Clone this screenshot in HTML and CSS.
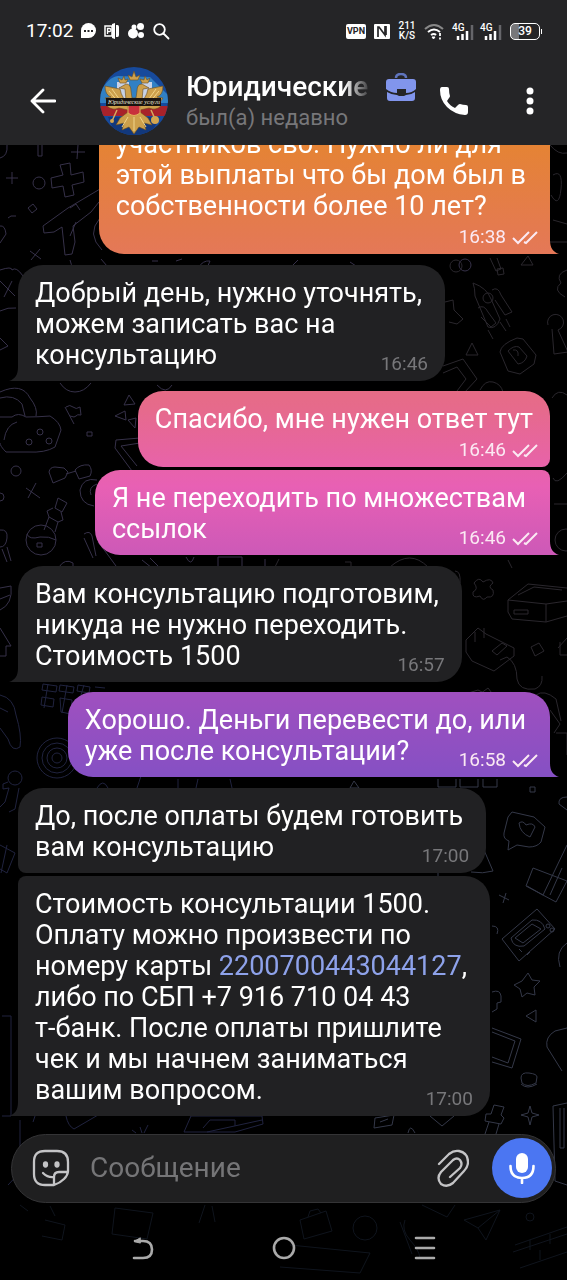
FILE: index.html
```html
<!DOCTYPE html>
<html lang="ru">
<head>
  <meta charset="UTF-8">
  <meta name="viewport" content="width=device-width, initial-scale=1.0">
  <title>Чат</title>
  <link rel="stylesheet" href="styles.css">
</head>
<body>
  <!-- обои чата -->
  <svg class="wallpaper" viewBox="0 0 567 1280" preserveAspectRatio="xMidYMid slice" aria-hidden="true">
    <g class="doodle violet">
      <path d="M38 145v11h4v-11M0 158q8-2 7-13M71 152h14M78 145l-1 14M6 178h12M12 172v12M60 165l10-2 1 12 12-3 1 10-12 3 2 10-9 2-2-11-11 2-1-10 12-3z"/>
      <circle cx="39" cy="183" r="6"/>
      <path d="M28 208l5-4 4 5-5 4zM0 226q5-1 6 8l-6 9M8 218l3-2h5M100 189L68 208l-25 18 1 7 10-1 8-5 3 28 7-1 3-12-2-16 18-14 8-10M70 208l6-4 4 6M76 222l-6 14M100 218q-14 16 2 32M30 251l11 8M40 249l-9 11M70 260q2 10 10 13M101 259l6 7M0 270q12-4 12 0 4-4 11 6M0 281l15 15M12 281l-8 16M0 311q8-4 16-3M0 338l8 8-8 4"/>
      <path d="M152 261h6M153 267h6M176 261l6-2M176 267l6 1M198 268q5-8 12-7l-3 7M290 268l8-8M350 262l9 6M465 271a6 6 0 1 1 0-12 6 6 0 0 1 0 12M60 383q6 9 15 9t16-9M157 385q9 10 15 0M0 392q22-10 30 6 8 10 6 18M0 398q14-4 22 6l3 12M0 417h12q6-5 14 0 12 0 24-1 10 6 11 14l-6 17q-10 6-27 5H6q-6-6-6-9M4 440q2-15 13-18"/>
      <circle cx="40" cy="432" r="3"/><circle cx="29" cy="442" r="3"/><circle cx="49" cy="441" r="3"/>
      <path d="M65 407l9 17M66 407q4-3 7 0t7 0l1 8q-4-1-5 1t-6 0M124 405l5-10 6 9zM115 416l10-5 1 9zM128 420l8-2-1 10zM87 432h5v4h-5zM140 438l-24 2-1 8 17 23M140 443l-19 3 16 20M49 472q1-5 6-5l9 1 4 4-3 6-12 5zM66 474l10-3M75 470q5-6 14-5 4 5 1 11l-11 3z"/>
      <circle cx="16" cy="471" r="5"/><circle cx="0" cy="497" r="4"/>
      <path d="M26 488l14 10M36 483l-8 15M97 480q-14-3-17 10 0 14 14 16M97 484q-9 3-6 11M58 498l9 5-5 9-7-4zM53 508l-6 3 2 6 9 5 5-2-2-8M49 517l-5 13M58 522l-3 10M27 534q2 6 13 3 9-1 16 3"/>
      <circle cx="41" cy="540" r="15"/><path d="M37 543h5v4h-5zM0 530q8-1 7 8t-7 9M2 549l5 13M7 547l4 14M84 534q6-4 8 2l4 20M84 538l9 20M98 542q8 10 18 24M142 560l10 8M150 558l10 10M186 557q5 10 8 0M218 567v-10h24v10M265 567v-8M59 567q6-9 14-4v4M0 588l11-2q2 18-11 24M0 599l10-4M0 628l11 18H6v10H0"/>
    </g>
    <g class="doodle blue">
      <path d="M43 684l14 2-1 6-14-2zM60 685l14 2-1 6-14-2zM78 685l12 2-1 6-12-2zM95 687l10 1M42 697l12 2-1 8-12-2zM60 698l12 2-1 14-10-2zM48 684l-4 24M67 685l-5 28M84 685l-3 10M0 695q14 3 16 20 6 20 4 32-8 6-12-8L0 728M0 708l8 4"/>
      <circle cx="57" cy="758" r="20"/><circle cx="57" cy="758" r="15"/><circle cx="57" cy="758" r="10"/><circle cx="57" cy="758" r="5"/>
      <circle cx="15" cy="778" r="7"/><path d="M8 782l-5 2v5l6-1-4 14-5 5M19 788l-4 21-6 3M97 788q6-10 11 0M137 788l4-12M178 779v9M196 788l2-9M230 779l2 9M0 845l15 8-8 20-7-4M1 873l6-28M2 1016h9v100H2M35 1116l-2 6M66 1116q2 10 8 13l24-14M140 1127l2 6M132 1130l4 3M148 1125l-4 8M184 1132l7-16h71l1 8-28 8h-51M203 1128l7-8h25v6M262 1120l-55 12M8 1185l16-17M20 1120v60"/>
    </g>
    <g class="doodle grey">
      <path d="M550 145q8 10 17 8M553 175q10-6 8 14t-10 6M553 220l14 4M550 242h17M475 296q0-8-2-13 14 5 18 16l9 20q-4 11-12 8zM492 290q6-4 9 5l11 17-7 3-10-15M478 308q6-4 10 4l8 11-5 4-10-10M500 322l6 9M506 319l4 8M488 330l5 9"/>
      <circle cx="488" cy="298" r="5"/><circle cx="456" cy="266" r="6"/>
      <path d="M490 258l6 13 5-2-4-11M497 269l6-1 1 6-6 1zM528 256l5 9h-12zM567 270q-12 4-6 13-9 7 4 14M548 325a8 8 0 1 1 10 5l10 22-14 2-2-25M472 343l6 12h-12zM500 352q1-8 17-14l6 1 13 16-2 9-14 10-12-3zM508 351q6-6 11-4l8 9q-2 7-9 8zM513 350q6-1 5 6M445 302l8-2 1 10 9 9-6 5-8-2M443 366l20-7 14 20-13 14M443 373l14-6 9 12-9 12M480 390q5-10 13-8t10 10M552 398q6-10 15-3M553 478q3 8 14-5M554 504h13"/>
      <circle cx="566" cy="540" r="11"/><path d="M508 560l4 8M345 562h6v5h-6M275 567l4-8M390 567q20-18 38 0M455 571q6 0 5 12M474 583q5-7 9-1 8-5 10 1-6 4 0 7 2 8-6 7-4 5-7-1-8 3-7-4 6-3 1-9zM508 600l20-16 39 4M508 600l38 4 21-3M508 600v12l4 7 34 3 21-6M546 604v18M514 610h14v4h-14zM518 595l16-8 28 3M466 640l12-12 8 6 28 14v8l-20 15-22-10-6-9zM475 642v-10M484 638v-10M492 651l10-8 5 3-10 9zM500 660l7-3q10 6 10 22 2 12 18 10 8-3 7-13M531 647l8-4 5 8-9 5zM558 648l9-10M560 642v13h7M462 695l16-5 12 6M476 697l12-9 7 9M536 695q8-6 20 4l5 22M550 710l10 14-6 9M556 733h11v22"/>
    </g>
    <g class="doodle steel">
      <path d="M350 788l4-7 5 7zM438 779v8h18v-8M460 779v8h18v-8M483 779v8h14v-8M530 787h5v5h-5zM567 797q-9 0-8 7l8 6M512 812l22 5 11 10-4 15q-4 5-12 5l-12-2-9 5 1-9q-6-2-5-8l4-16zM519 823q4-3 7 2 7-3 9 2l-5 10q-10-4-11-14M484 850l9 21q-10 3-22 1M567 845l-24 50-16-9M533 868l-7 18 30 16 11-21zM550 895l12-27M499 895l10 5M506 893l-3 10M432 872h6v5h-6M502 939l35-30 18 20-36 32zM511 938l21-18q10-1 13 9l-21 17q-11 2-13-8zM515 938l17-14 9 5-18 14zM519 949l3 3M527 955l3-3"/>
      <circle cx="548" cy="926" r="2"/><circle cx="552" cy="930" r="2"/>
      <path d="M567 943q-12 8-7 24M492 926q8 0 5 8M528 973l4 7 8 1-6 6 1 8-8-2-5 4-2-8-6-4 8-4zM492 992q8-3 9 4v6l-4 1v6l-5 3M526 1016l10-6v12zM492 1028l29 11-9 29-20-6M492 1032l23 9-7 22-16-6M567 1028l-12 3q-10 6-8 16l15 24M521 1078q0-6 8-5t8 4l-1 6q-9 5-14 0zM521 1084q6 6 16 0M530 1106l2 7 7 2-7 2-2 8-2-8-7-2 7-2zM553 1106l14-3M553 1106l2 75 12 4M560 1108v40h4v-40M494 1105l10 2-3 8 3 3-3 6-16-3 1-7h5zM489 1122l-4 12M499 1124l-3 10M375 1118l19-3-2 10-18 3zM380 1122l8-3M430 1116l12 10 12-10M408 1133q2-10 7 0"/>
    </g>
    <g class="doodle faint">
      <path d="M20 1205l8 6M50 1206l5 10M45 1220l20 5-3 15-20-4M115 1208l38 5-6 26-35-5zM205 1205l-6 18M212 1206l3 16M300 1220l26-9 6 20-28 8zM308 1217l2-6 8-2 3 4M422 1205l25 12 8-12M464 1220l36-10-14 30-8-12zM478 1228l22-18M515 1245l52-18M513 1252l54-18M520 1268l47-16M530 1240v10M550 1234v10M540 1250v10M405 1220q-4 10 5 20t10 18M400 1222l12 32"/>
      <circle cx="365" cy="1228" r="12"/><circle cx="530" cy="1217" r="4"/><path d="M290 1245l80 8-10 20-80-6"/>
    </g>
  </svg>

  <header class="header">
    <div class="status-bar">
      <div class="status-left">
        <span class="clock">17:02</span>
        <svg width="15" height="16" viewBox="0 0 15 16"><path d="M0 15V7.500A7.500 7.500 0 1 1 7.500 15z" fill="#fff"/><path d="M3 7h2v2H3zM6.500 7h2v2h-2zM10 7h2v2h-2z" fill="#252527"/></svg>
        <svg width="16" height="16" viewBox="0 0 16 16"><path d="M1 3h7v10H1z" fill="none" stroke="#fff" stroke-width="1.500"/><path d="M8 1l3-1v16l-3-1zM12 2h1.500q1.500 0 1.500 2v8q0 2-1.500 2H12z" fill="#fff"/><path d="M3.500 11V5.500h2q1.500 0 1.500 1.500t-1.500 1.500h-2" fill="none" stroke="#fff" stroke-width="1.300"/></svg>
        <svg width="17" height="16" viewBox="0 0 17 16" fill="#fff"><circle cx="6" cy="4" r="2.500"/><circle cx="12.500" cy="3.500" r="3.500"/><circle cx="5" cy="10.500" r="5"/><circle cx="13" cy="12" r="3"/></svg>
        <svg width="17" height="17" viewBox="0 0 17 17" fill="none" stroke="#fff" stroke-width="1.800" stroke-linecap="round"><circle cx="6.500" cy="6.500" r="5.300"/><path d="M10.500 10.500l5 5"/></svg>
      </div>
      <div class="status-right">
        <span class="vpn">VPN</span>
        <svg width="16" height="15" viewBox="0 0 16 15"><path d="M0 1q0-1 1-1h14q1 0 1 1v13q0 1-1 1H1q-1 0-1-1z" fill="#fff"/><path d="M4 13V3h1l6 8V2M12 2v9" fill="none" stroke="#252527" stroke-width="1.700"/></svg>
        <span class="speed">211<br>K/S</span>
        <svg width="20" height="17" viewBox="0 0 20 17" fill="none" stroke="#fff" stroke-width="2"><path d="M1 6q9-8 18 0" stroke="#888"/><path d="M4 9q6-5 12 0M7 12q3-2 5 0"/><path d="M8 14h3l-1.500 2z" fill="#fff" stroke-width="1"/><path d="M16 10v3M16 14.500v2" stroke-width="1.800"/></svg>
        <span class="signal">
          <b>4G</b>
          <svg width="22" height="17" viewBox="0 0 22 17" stroke-width="2.500"><path d="M6 17v-4M10.500 17v-6M15 17V8" stroke="#fff"/><path d="M20 17V2" stroke="#66666a"/></svg>
        </span>
        <span class="signal">
          <b>4G</b>
          <svg width="22" height="17" viewBox="0 0 22 17" stroke-width="2.500"><path d="M6 17v-4M10.500 17v-6M15 17V8" stroke="#fff"/><path d="M20 17V2" stroke="#66666a"/></svg>
        </span>
        <span class="battery">39</span>
      </div>
    </div>

    <div class="chat-bar">
      <button class="icon-btn back" aria-label="Назад">
        <svg width="26" height="26" viewBox="0 0 26 26" fill="none" stroke="#fff" stroke-width="2.800" stroke-linecap="round" stroke-linejoin="round"><path d="M25 13H2M13 2L2 13l11 11"/></svg>
      </button>
      <svg class="avatar" viewBox="0 0 68 68" aria-label="Фото профиля">
        <defs>
          <clipPath id="round"><circle cx="34" cy="34" r="34"/></clipPath>
        </defs>
        <g clip-path="url(#round)">
          <path fill="#174a9c" d="M0 0h68v68H0z"/>
          <path fill="#3180c4" d="M0 26q8-16 18-17l32 1 18 18v8H0z"/>
          <path fill="#c8d2e6" d="M17 15h12v20H17zM42 15h10v20H42z"/>
          <path fill="#a8222a" d="M0 39h68v10H0z"/>
          <path fill="#12387c" d="M8 50h52L50 68H16z"/>
          <g fill="#cda04c" stroke="#6b4d1e" stroke-width="0.600">
            <path d="M28 35q-6-3-8-13L5 19q0 9 6 11l-6 1q3 6 8 6l-6 2q5 5 12 2l9 2z"/>
            <path d="M40 35q6-3 8-13l15-3q0 9-6 11l6 1q-3 6-8 6l6 2q-5 5-12 2l-9 2z"/>
            <path d="M32 31l-1-7q0-7-5-7l-7 4 6 1 1 11 3 12h10l3-12 1-11 6-1-7-4q-5 0-5 7l-1 7z"/>
            <path d="M28 45l-8 6-4 7 8-2-2 7 7-3 5 7 5-7 7 3-2-7 8 2-4-7-8-6z"/>
            <path d="M30 13l-2-5 4 2 2-6 2 6 4-2-2 5zM20 16l-2-5 4 2 2-4 1 4 3-1-2 4zM42 16l-2-4 4 1 1-4 2 4 3-2-2 5z"/>
          </g>
          <path d="M9 24l10 12M12 22l10 14M59 24L49 36M56 22L46 36M34 50v14M28 50l-6 10M40 50l6 10" stroke="#f0d48a" stroke-width="1"/>
          <path d="M28 38h12v8q-6 5-12 0z" fill="#c8313c" stroke="#e4b45c"/>
          <path d="M17 43l-5 11M51 43l5 11" stroke="#d4ac60" stroke-width="1.500"/>
          <circle cx="55" cy="53" r="4" fill="#d4a650"/><circle cx="12" cy="54" r="2" fill="#d4a650"/>
          <path fill="#19130f" d="M6 31h55v8H6z"/>
          <text class="avatar-text" x="34" y="37" text-anchor="middle">Юридические услуги</text>
        </g>
      </svg>
      <div class="peer">
        <div class="peer-title">
          <h1>Юридические</h1>
          <svg width="30" height="28" viewBox="0 0 30 28"><path d="M10 5q0-4 5-4t5 4" fill="none" stroke="#5f74bd" stroke-width="2.500"/><path d="M3 6h24q3 0 3 3v7q-4 4-10 4v-4h-9v4q-6 0-11-4V9q0-3 3-3zM1 19q5 3 10 3l2 1h5l2-1q5 0 9-3v6q0 3-3 3H4q-3 0-3-3z" fill="#8195ec"/></svg>
        </div>
        <p>был(а) недавно</p>
      </div>
      <button class="icon-btn call" aria-label="Позвонить">
        <svg width="28" height="28" viewBox="0 0 28 28"><path d="M2 0h5q2 0 2 2 0 4 1 7 0 1-1 2l-2 3q3 5 8 7l3-3q1-1 2-1 3 1 6 1 2 0 2 2v5q0 3-3 3Q14 27 7 20T0 3q0-3 2-3z" fill="#fff"/></svg>
      </button>
      <button class="icon-btn more" aria-label="Меню">
        <svg width="8" height="28" viewBox="0 0 8 28" fill="#fff"><circle cx="4" cy="4" r="3.500"/><circle cx="4" cy="14" r="3.500"/><circle cx="4" cy="24" r="3.500"/></svg>
      </button>
    </div>
  </header>

  <main class="messages">
    <div class="message out tail stacked">
      <p class="text">участников сво. Нужно ли для<br>этой выплаты что бы дом был в<br>собственности более 10 лет?</p>
      <span class="meta">16:38 <svg class="checks" viewBox="0 0 27 15"><path d="M1 8l5 5L17 2M12 12l2 1L25 2"/></svg></span>
    </div>

    <div class="message in tail">
      <p class="text">Добрый день, нужно уточнять,<br>можем записать вас на<br>консультацию</p>
      <span class="meta">16:46</span>
    </div>

    <div class="message out group-first stacked single">
      <p class="text">Спасибо, мне нужен ответ тут</p>
      <span class="meta">16:46 <svg class="checks" viewBox="0 0 27 15"><path d="M1 8l5 5L17 2M12 12l2 1L25 2"/></svg></span>
    </div>
    <div class="message out group-last tail">
      <p class="text">Я не переходить по множествам<br>ссылок</p>
      <span class="meta">16:46 <svg class="checks" viewBox="0 0 27 15"><path d="M1 8l5 5L17 2M12 12l2 1L25 2"/></svg></span>
    </div>

    <div class="message in tail">
      <p class="text">Вам консультацию подготовим,<br>никуда не нужно переходить.<br>Стоимость 1500</p>
      <span class="meta">16:57</span>
    </div>

    <div class="message out tail">
      <p class="text">Хорошо. Деньги перевести до, или<br>уже после консультации?</p>
      <span class="meta">16:58 <svg class="checks" viewBox="0 0 27 15"><path d="M1 8l5 5L17 2M12 12l2 1L25 2"/></svg></span>
    </div>

    <div class="message in group-first">
      <p class="text">До, после оплаты будем готовить<br>вам консультацию</p>
      <span class="meta">17:00</span>
    </div>
    <div class="message in group-last tail">
      <p class="text">Стоимость консультации 1500.<br>Оплату можно произвести по<br>номеру карты <a href="#">2200700443044127</a>,<br>либо по СБП +7 916 710 04 43<br>т-банк. После оплаты пришлите<br>чек и мы начнем заниматься<br>вашим вопросом.</p>
      <span class="meta">17:00</span>
    </div>
  </main>

  <form class="composer">
    <button type="button" class="icon-btn" aria-label="Стикеры">
      <svg width="38" height="38" viewBox="0 0 38 38" fill="none" stroke="#c4c4c6" stroke-width="2.300" stroke-linecap="round" stroke-linejoin="round"><path d="M22 36H13Q2 36 2 25V13Q2 2 13 2h12q11 0 11 11v9q0 4-4 8t-10 6zM22 36v-8q0-5 5-5h9M11 24q5 5 11 4"/><ellipse cx="13.500" cy="15.500" rx="1.500" ry="2" fill="#c4c4c6"/><ellipse cx="25" cy="15.500" rx="1.500" ry="2" fill="#c4c4c6"/></svg>
    </button>
    <input type="text" name="message" placeholder="Сообщение" aria-label="Сообщение">
    <button type="button" class="icon-btn attach" aria-label="Прикрепить">
      <svg width="32" height="38" viewBox="0 0 32 38" fill="none" stroke="#c4c4c6" stroke-width="2.300" stroke-linecap="round"><path d="M2 15L12 5q5-4 10-3 9 2 9 11 0 5-4 9L16 34q-6 5-12 1-5-6 0-12l12-12q4-3 7 0 3 4 0 8L13 28"/></svg>
    </button>
    <button type="button" class="mic" aria-label="Голосовое сообщение">
      <svg width="26" height="32" viewBox="0 0 26 32"><rect x="7" y="1" width="12" height="20" rx="6" fill="#fff"/><path d="M1.500 14q0 12 11.500 12t11.500-12M13 26v5" fill="none" stroke="#fff" stroke-width="2.600" stroke-linecap="round"/></svg>
    </button>
  </form>

  <nav class="system-nav">
    <button class="icon-btn" aria-label="Назад">
      <svg width="22" height="24" viewBox="0 0 22 24" fill="none" stroke="#aaa" stroke-width="2.600" stroke-linecap="round"><path d="M3 5h8q9 0 9 8.500T11 22H2"/><path d="M8 2L2 5.500 8 7z" fill="#aaa" stroke-width="1"/></svg>
    </button>
    <button class="icon-btn" aria-label="Домой">
      <svg width="24" height="24" viewBox="0 0 24 24" fill="none" stroke="#aaa" stroke-width="2.600"><circle cx="12" cy="12" r="10"/></svg>
    </button>
    <button class="icon-btn" aria-label="Недавние">
      <svg width="22" height="24" viewBox="0 0 22 24" stroke="#aaa" stroke-width="2.600" stroke-linecap="round"><path d="M2 2h18M2 12h18M2 22h18"/></svg>
    </button>
  </nav>
</body>
</html>
```

FILE: styles.css
```css
* { margin: 0; padding: 0; box-sizing: border-box; }
body {
  display: flex;
  flex-direction: column;
  height: 100vh;
  overflow: hidden;
  background: #000;
  color: #fff;
  font-family: Roboto, "Noto Sans", sans-serif;
}
svg { display: block; flex-shrink: 0; }
button { border: none; background: none; cursor: pointer; }
.icon-btn { display: flex; align-items: center; justify-content: center; }

/* wallpaper */
.wallpaper {
  position: fixed;
  inset: 0;
  width: 100%;
  height: 100%;
  z-index: -1;
}
.doodle { fill: none; stroke-width: 1; stroke-linejoin: round; }
.violet { stroke: #363149; }
.blue { stroke: #20233f; }
.grey { stroke: #2a272d; }
.steel { stroke: #343848; }
.faint { stroke: #0f141d; }

/* header */
.header { background: #252527; flex-shrink: 0; }
.status-bar {
  display: flex;
  justify-content: space-between;
  align-items: center;
  height: 60px;
  padding: 2px 27px 0 26px;
}
.status-left, .status-right { display: flex; align-items: center; }
.status-left { gap: 8px; }
.status-right { gap: 8px; }
.clock { font-size: 19px; line-height: 24px; }
.vpn {
  width: 20px;
  height: 15px;
  border-radius: 2px;
  background: #fff;
  color: #252527;
  font-size: 9px;
  font-weight: 700;
  line-height: 15px;
  text-align: center;
}
.speed {
  width: 18px;
  font-size: 10px;
  font-weight: 500;
  line-height: 10px;
  text-align: center;
}
.signal { display: grid; width: 22px; }
.signal b, .signal svg { grid-area: 1 / 1; }
.signal b { font-size: 10px; font-weight: 500; line-height: 9px; }
.signal + .signal { margin-left: -2px; }
.battery {
  position: relative;
  width: 30px;
  height: 17px;
  border: 1px solid #fff;
  border-radius: 5px;
  background: linear-gradient(90deg, #77777a 8px, transparent 8px);
  font-size: 12px;
  font-weight: 500;
  line-height: 15px;
  text-align: center;
}
.battery::after {
  content: "";
  position: absolute;
  top: 5px;
  right: -3px;
  width: 1px;
  height: 5px;
  background: #fff;
}

.chat-bar {
  display: flex;
  align-items: center;
  height: 85px;
  padding: 0 33px 4px 30px;
}
.avatar { width: 68px; height: 68px; margin: 0 18px 0 44px; }
.avatar-text { fill: #f2e9dc; font: italic 6px "Liberation Serif", serif; }
.peer { flex: 1; min-width: 0; padding-top: 2px; }
.peer-title { display: flex; align-items: center; gap: 14px; }
.peer h1 {
  flex: 0 1 186px;
  overflow: hidden;
  font-size: 28px;
  font-weight: 500;
  line-height: 32px;
  white-space: nowrap;
  -webkit-mask-image: linear-gradient(90deg, #000 85%, transparent);
  mask-image: linear-gradient(90deg, #000 85%, transparent);
}
.peer p { color: #77777a; font-size: 22px; line-height: 30px; }
.call { margin-right: 58px; }

/* messages */
.messages {
  flex: 1;
  min-height: 0;
  display: flex;
  flex-direction: column;
  justify-content: flex-end;
  overflow: hidden;
  padding: 0 17px 18px 18px;
}
.message {
  position: relative;
  display: grid;
  flex-shrink: 0;
  max-width: 100%;
  margin-top: 10px;
  padding: 13px 17px 6px;
  border-radius: 25px;
}
.in { align-self: flex-start; background: #212123; }
.out {
  align-self: flex-end;
  padding-right: 11px;
  background: linear-gradient(180deg, #e5852f 10%, #e47a50 18%, #e66a8c 32%, #e860b4 38%, #c958b8 44%, #a050bf 54%, #8450c4 61%) fixed;
}
.out + .in { margin-top: 11px; }
.message.group-last { margin-top: 3px; }
.text {
  grid-area: 1 / 1;
  padding: 0 6px 4px 0;
  font-size: 27px;
  line-height: 31px;
}
.text a { color: #8ea2ea; text-decoration: none; }
.out .text { padding-right: 13px; }
.out.single .text { padding-right: 6px; }
.meta {
  grid-area: 1 / 1;
  align-self: end;
  justify-self: end;
  display: flex;
  align-items: center;
  gap: 6px;
  color: #77777a;
  font-size: 19px;
  line-height: 22px;
}
.stacked .meta { grid-row: 2; }
.out .meta { color: #fbe9f3; }
.checks {
  width: 27px;
  height: 15px;
  fill: none;
  stroke: #fbe9f3;
  stroke-width: 2;
}

.out.tail { border-bottom-right-radius: 0; }
.in.tail { border-bottom-left-radius: 0; }
.out.group-first { border-bottom-right-radius: 8px; }
.out.group-last { border-top-right-radius: 8px; }
.in.group-first { border-bottom-left-radius: 8px; }
.in.group-last { border-top-left-radius: 8px; }
.tail::after {
  content: "";
  position: absolute;
  bottom: 0;
  width: 9px;
  height: 14px;
  background: inherit;
}
.out.tail::after { left: 100%; clip-path: path("M0 0C0 8 3 12 9 14H0Z"); }
.in.tail::after { right: 100%; clip-path: path("M9 0C9 8 6 12 0 14H9Z"); }

/* composer */
.composer {
  display: flex;
  align-items: center;
  flex-shrink: 0;
  height: 69px;
  margin: 0 11px;
  padding: 0 3px 2px 20px;
  border: 1px solid #343436;
  border-radius: 35px;
  background: #1f1f20;
}
.composer input {
  flex: 1;
  min-width: 0;
  margin-left: 20px;
  border: none;
  outline: none;
  background: none;
  color: #fff;
  font: 28px/32px Roboto, "Noto Sans", sans-serif;
}
.composer input::placeholder { color: #757577; }
.attach { margin-right: 23px; }
.mic {
  display: flex;
  align-items: center;
  justify-content: center;
  width: 60px;
  height: 60px;
  border-radius: 50%;
  background: #4b76f2;
}

.system-nav {
  display: grid;
  grid-template-columns: repeat(3, 1fr);
  align-items: start;
  flex-shrink: 0;
  height: 77px;
  padding: 33px 72px 0;
}
```
